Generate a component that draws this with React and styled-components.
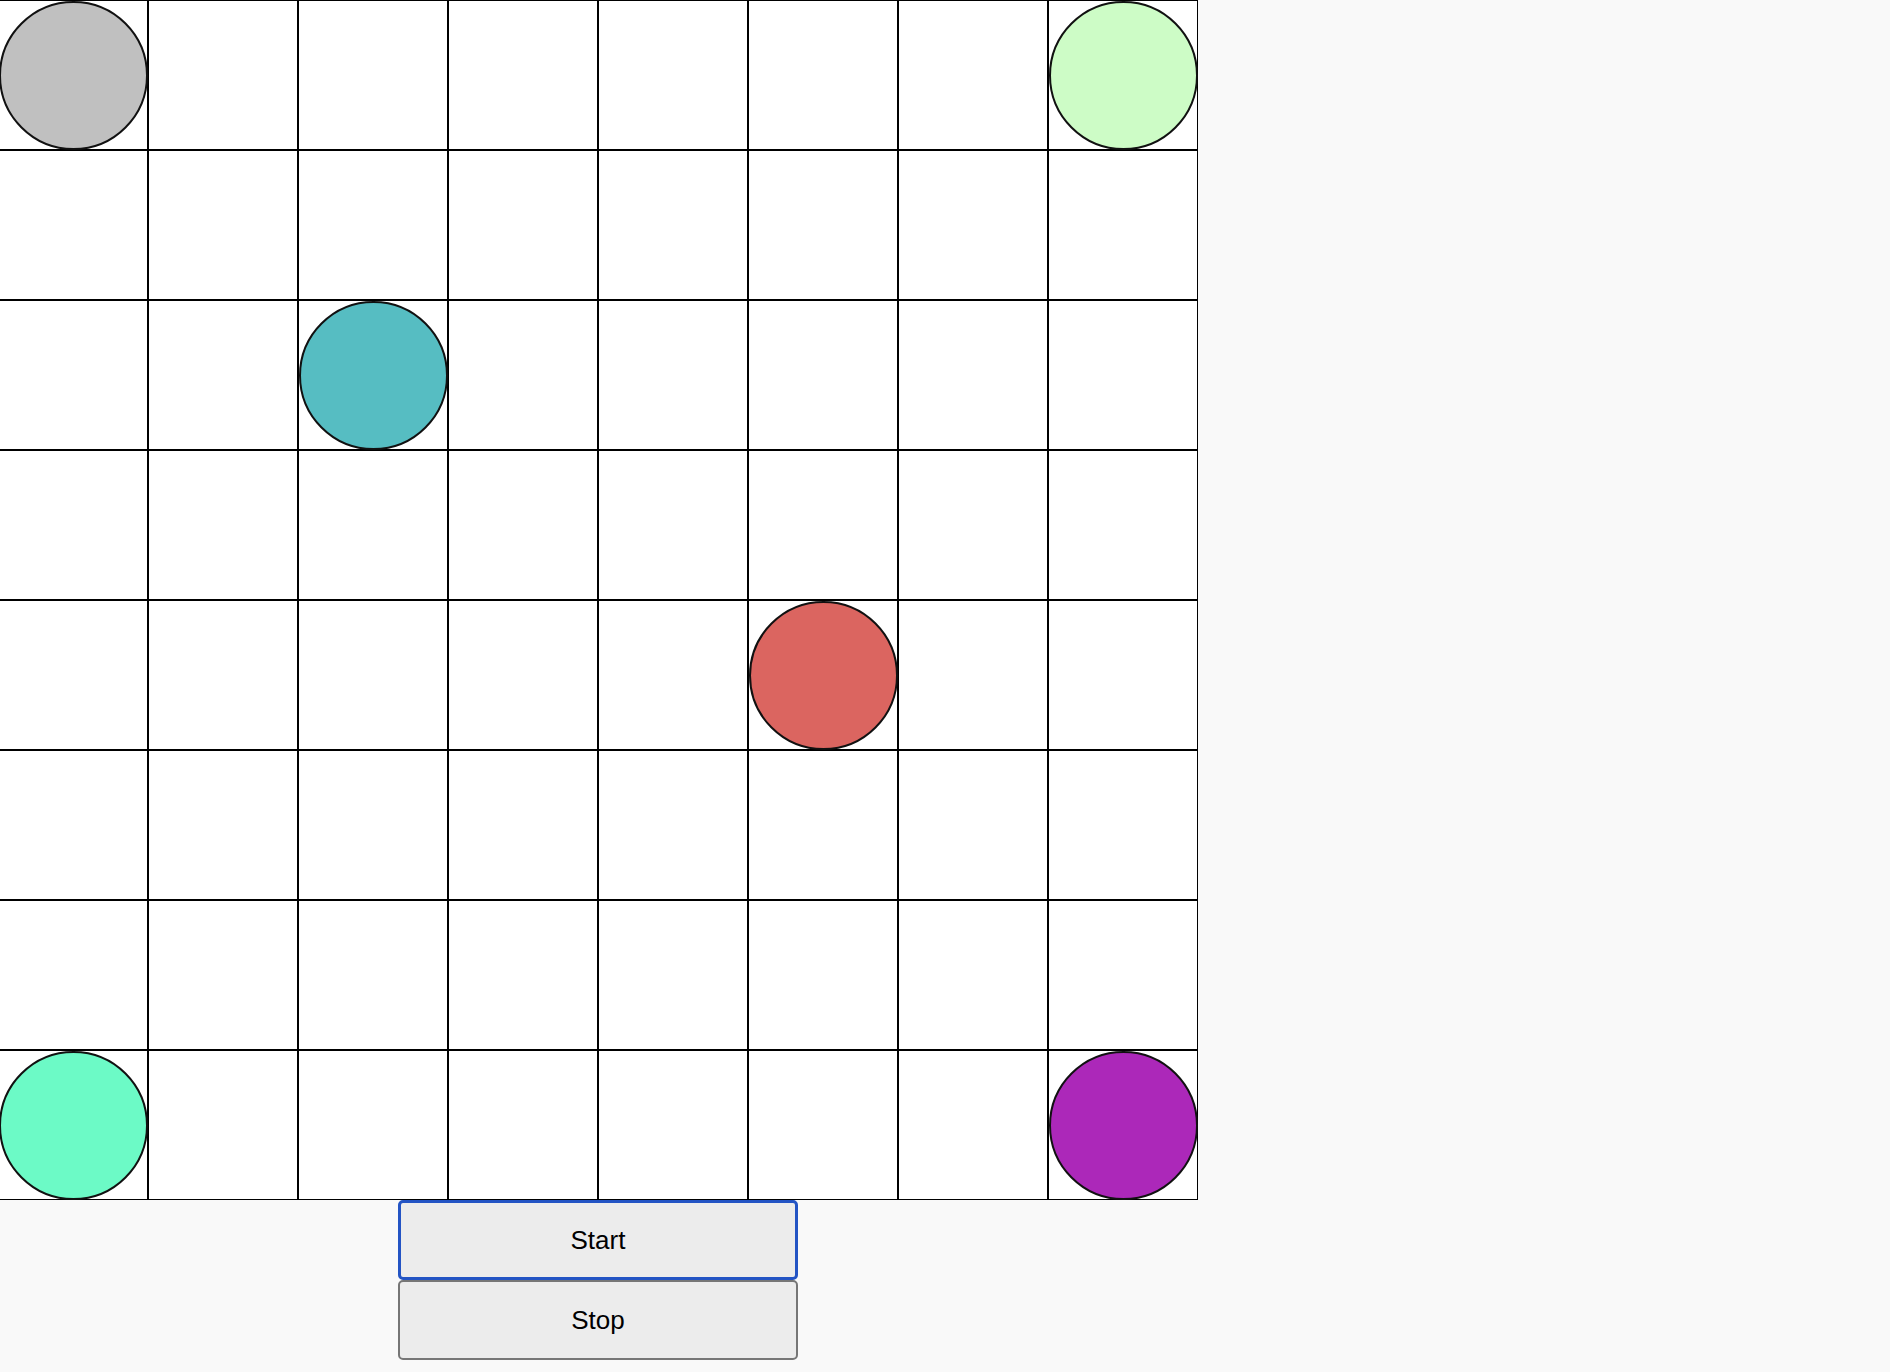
import React from "react";
import styled, { createGlobalStyle } from "styled-components";

const GlobalStyle = createGlobalStyle`
  html, body {
    margin: 0;
    padding: 0;
    background: #f9f9f9;
    font-family: "Liberation Sans", Arial, sans-serif;
    overflow: hidden;
  }
`;

const Page = styled.div`
  width: 1200px;
  margin-left: -2px;
  display: flex;
  flex-direction: column;
  align-items: center;
`;

const Board = styled.div`
  display: grid;
  grid-template-columns: repeat(8, 150px);
  grid-template-rows: repeat(8, 150px);
  width: 1200px;
  height: 1200px;
  background: #ffffff;
`;

const Cell = styled.div`
  box-sizing: border-box;
  width: 150px;
  height: 150px;
  border: 1px solid #000;
  background: #fff;
  display: flex;
  align-items: center;
  justify-content: center;
`;

const Piece = styled.div`
  box-sizing: border-box;
  flex-shrink: 0;
  width: 149px;
  height: 149px;
  border-radius: 50%;
  border: 2px solid #111;
  background: ${(p) => p.$color};
`;

const Controls = styled.div`
  display: flex;
  flex-direction: column;
  width: 400px;
`;

const Button = styled.button`
  box-sizing: border-box;
  width: 400px;
  height: 80px;
  margin: 0;
  background: #ececec;
  color: #000;
  font-family: "Liberation Sans", Arial, sans-serif;
  font-size: 26px;
  border-radius: 5px;
  border: ${(p) => (p.$focused ? "3px solid #2354c4" : "2px solid #767676")};
  cursor: pointer;
  outline: none;
`;

const pieces = {
  "0-0": "#c0c0c0",
  "0-7": "#cdfcc6",
  "2-2": "#56bdc2",
  "4-5": "#db6560",
  "7-0": "#6cfac6",
  "7-7": "#ac28b9",
};

export default function App() {
  const cells = [];
  for (let r = 0; r < 8; r++) {
    for (let c = 0; c < 8; c++) {
      const color = pieces[`${r}-${c}`];
      cells.push(
        <Cell key={`${r}-${c}`}>{color && <Piece $color={color} />}</Cell>
      );
    }
  }
  return (
    <>
      <GlobalStyle />
      <Page>
        <Board>{cells}</Board>
        <Controls>
          <Button $focused>Start</Button>
          <Button>Stop</Button>
        </Controls>
      </Page>
    </>
  );
}
